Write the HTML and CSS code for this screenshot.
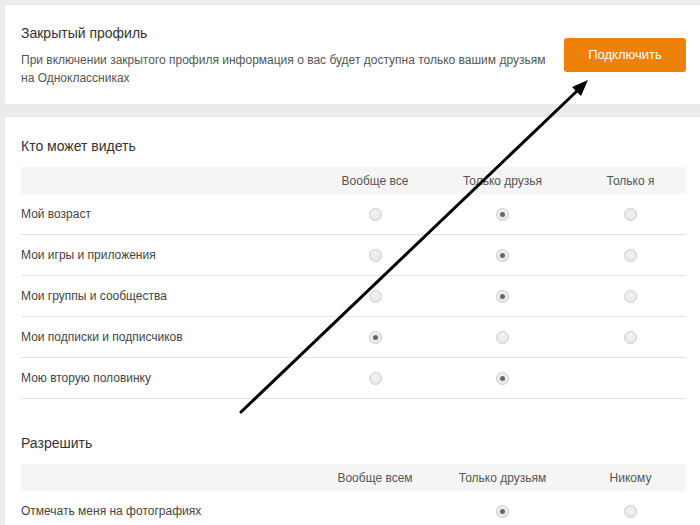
FILE: index.html
```html
<!DOCTYPE html>
<html lang="ru">
<head>
<meta charset="utf-8">
<title>Закрытый профиль</title>
<link rel="stylesheet" href="styles.css">
</head>
<body>
<div class="page">
  <section class="card card-top">
    <div class="top-text">
      <div class="title">Закрытый профиль</div>
      <div class="desc">При включении закрытого профиля информация о вас будет доступна только вашим друзьям на Одноклассниках</div>
    </div>
    <button class="btn">Подключить</button>
  </section>

  <section class="card card-settings">
    <div class="title">Кто может видеть</div>
    <div class="grid">
      <div class="row head"><span></span><span class="c">Вообще все</span><span class="c">Только друзья</span><span class="c">Только я</span></div>
      <div class="row"><span>Мой возраст</span><span class="c"><i class="radio"></i></span><span class="c"><i class="radio on"></i></span><span class="c"><i class="radio"></i></span></div>
      <div class="row"><span>Мои игры и приложения</span><span class="c"><i class="radio"></i></span><span class="c"><i class="radio on"></i></span><span class="c"><i class="radio"></i></span></div>
      <div class="row"><span>Мои группы и сообщества</span><span class="c"><i class="radio"></i></span><span class="c"><i class="radio on"></i></span><span class="c"><i class="radio"></i></span></div>
      <div class="row"><span>Мои подписки и подписчиков</span><span class="c"><i class="radio on"></i></span><span class="c"><i class="radio"></i></span><span class="c"><i class="radio"></i></span></div>
      <div class="row"><span>Мою вторую половинку</span><span class="c"><i class="radio"></i></span><span class="c"><i class="radio on"></i></span><span class="c"></span></div>
    </div>

    <div class="title title-2">Разрешить</div>
    <div class="grid">
      <div class="row head"><span></span><span class="c">Вообще всем</span><span class="c">Только друзьям</span><span class="c">Никому</span></div>
      <div class="row"><span>Отмечать меня на фотографиях</span><span class="c"></span><span class="c"><i class="radio on"></i></span><span class="c"><i class="radio"></i></span></div>
    </div>
  </section>
</div>

<svg class="arrow" viewBox="0 0 700 525" width="700" height="525">
  <line x1="241" y1="412" x2="577" y2="91" stroke="#000" stroke-width="3" stroke-linecap="round"/>
  <polygon points="588,80 581,96 572,87" fill="#000"/>
</svg>
</body>
</html>
```

FILE: styles.css
```css
html, body {
  margin: 0;
  padding: 0;
}
body {
  background: #ebebeb;
  font-family: "Liberation Sans", Arial, sans-serif;
  color: #333;
  width: 700px;
  height: 525px;
  overflow: hidden;
  position: relative;
}
.page {
  padding: 5px 0 0 5px;
}
.card {
  background: #fff;
  width: 695px;
  box-sizing: border-box;
  border-radius: 2px 0 0 2px;
}
.card-top {
  height: 99px;
  padding: 0 14px 0 16px;
  display: flex;
  align-items: center;
  justify-content: space-between;
}
.top-text {
  padding-top: 1px;
}
.title {
  font-size: 14px;
  line-height: 18px;
  color: #333;
}
.desc {
  margin-top: 9px;
  font-size: 12px;
  line-height: 18px;
  color: #555;
  width: 534px;
}
.btn {
  width: 122px;
  height: 34px;
  border: 0;
  border-radius: 3px;
  background: #ee8208;
  color: #fff;
  font-family: "Liberation Sans", Arial, sans-serif;
  font-size: 13px;
  padding: 0;
  flex: none;
}
.card-settings {
  margin-top: 13px;
  padding: 20px 14px 0 16px;
  height: 420px;
}
.grid {
  margin-top: 12px;
}
.title-2 {
  margin-top: 35px;
}
.row {
  display: grid;
  grid-template-columns: 1fr 110px 145px 111px;
  align-items: center;
  height: 40px;
  border-bottom: 1px solid #e3e3e3;
  font-size: 12px;
  color: #444;
}
.row.head {
  height: 27px;
  background: #f5f5f5;
  border-bottom: 0;
  color: #555;
}
.c {
  text-align: center;
  display: flex;
  justify-content: center;
  align-items: center;
}
.radio {
  display: block;
  width: 13px;
  height: 13px;
  box-sizing: border-box;
  border-radius: 50%;
  border: 1px solid #cdcdcd;
  background: radial-gradient(circle at 50% 40%, #f4f4f4 0, #e2e2e2 100%);
  position: relative;
}
.radio.on::after {
  content: "";
  position: absolute;
  left: 3px;
  top: 3px;
  width: 5px;
  height: 5px;
  border-radius: 50%;
  background: #666;
}
.arrow {
  position: absolute;
  left: 0;
  top: 0;
  pointer-events: none;
}
```
